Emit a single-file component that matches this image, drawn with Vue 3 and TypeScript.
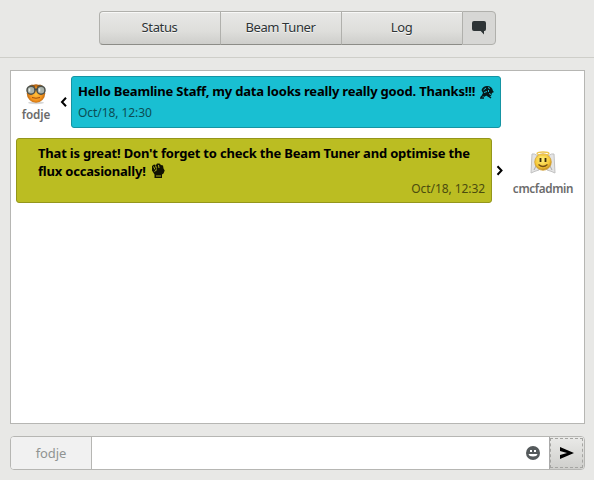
<script setup lang="ts">
import { ref } from 'vue'

const tabs: string[] = ['Status', 'Beam Tuner', 'Log']
const user = 'fodje'
const draft = ref('')
</script>

<template>
  <div class="window">
    <header class="toolbar">
      <nav class="switcher">
        <button v-for="tab in tabs" :key="tab" class="tab"><span>{{ tab }}</span></button>
        <button class="tab active" aria-label="Chat">
          <svg width="14" height="14" viewBox="0 0 14 14">
            <path d="M2 0h10q2 0 2 2v6q0 2-1.500 2H12v3.500L8.700 10H2q-2 0-2-2V2q0-2 2-2z" fill="#2e3436" />
          </svg>
        </button>
      </nav>
    </header>

    <main class="chat">
      <section class="row incoming">
        <div class="person">
          <svg class="avatar" width="22" height="22" viewBox="0 0 22 22">
            <defs>
              <radialGradient id="orange" cx=".5" cy=".55" r=".55">
                <stop offset="0" stop-color="#ffc13c" />
                <stop offset=".6" stop-color="#f3921c" />
                <stop offset="1" stop-color="#a85a10" />
              </radialGradient>
            </defs>
            <ellipse cx="11" cy="19.800" rx="8" ry="1.500" fill="#d6d6d6" />
            <circle cx="11" cy="10.500" r="9.200" fill="url(#orange)" />
            <path d="M4 3.500q3-3 6 0M12 3.500q3-3 6 0" fill="none" stroke="#8a5010" />
            <circle cx="6" cy="7.200" r="4" fill="#aab3ac" stroke="#4c504a" stroke-width="1.500" />
            <circle cx="16" cy="7.200" r="4" fill="#aab3ac" stroke="#4c504a" stroke-width="1.500" />
            <path d="M9.500 7q1.500-1.500 3 0" fill="none" stroke="#4c504a" stroke-width="1.300" />
            <path d="M4.500 5.500v3M14.500 5.500v3" stroke="#e3e9e5" stroke-width="1.500" />
            <path d="M7 14.500q4 1.500 8 0" fill="none" stroke="#a3500c" />
          </svg>
          <span class="name">fodje</span>
        </div>
        <svg class="arrow" width="8" height="12" viewBox="0 0 8 12"><path d="M6 1.800 2 6l4 4.200" /></svg>
        <article class="bubble blue">
          <p class="message"><span class="words">Hello Beamline Staff, my data looks really really good. Thanks!!!</span>
            <svg class="glyph" width="14" height="14" viewBox="0 0 14 14">
              <path d="M1.500 5Q3 1 7 1q5 0 6 5l1 1-2 1-1 3-3 1-1-2-3 2-2-2 1-2z" fill="#06191b" />
              <path d="M3.500 5 6 3M4 7.500l3-1M9 8.500l2 1M8 2.500l2 1M8.500 5v2" stroke="#19bfd2" fill="none" />
              <path d="M1 12q3-3 6-2l4 3M0 13h4" stroke="#06191b" stroke-width="1.500" fill="none" />
            </svg>
          </p>
          <time>Oct/18, 12:30</time>
        </article>
      </section>

      <section class="row outgoing">
        <article class="bubble olive">
          <p class="message"><span class="words">That is great! Don't forget to check the Beam Tuner and optimise the</span><br><span class="words">flux occasionally!</span>
            <svg class="glyph" width="14" height="16" viewBox="0 0 14 16">
              <path d="M3.500 15v-3.500L1 7.500V3l2-1.500 2 .5 1-1.500h2.500L10 2l2 .5.5 3 1.200 2-1.200 3-1.500 1V15z" fill="#111302" />
              <path d="M2.500 3.500 4 6.500M4.500 2.500l1 3M7.500 2 8 5M3.500 8.500 6 6.500M5 13h5" fill="none" stroke="#bbbd22" stroke-width=".9" />
            </svg>
          </p>
          <time>Oct/18, 12:32</time>
        </article>
        <svg class="arrow" width="8" height="12" viewBox="0 0 8 12"><path d="m1.500 1.300 4 4.200-4 4.200" /></svg>
        <div class="person">
          <svg class="avatar" width="26" height="24" viewBox="0 0 26 24">
            <defs>
              <radialGradient id="yellow" cx=".45" cy=".35" r=".65">
                <stop offset="0" stop-color="#fff07a" />
                <stop offset=".7" stop-color="#f5c737" />
                <stop offset="1" stop-color="#bd861c" />
              </radialGradient>
            </defs>
            <path d="M8 5Q4 2 2 3L1 22q4-2 8-3zM18 5q4-3 6-2l1 19q-4-2-8-3z" fill="#e4e4e4" stroke="#c2c2c2" />
            <path d="m4 19 2-4M22 19l-2-4" stroke="#aaa" />
            <circle cx="13" cy="11" r="8.300" fill="url(#yellow)" stroke="#cf9a2b" stroke-width=".7" />
            <ellipse cx="13" cy="2.500" rx="6" ry="1.500" fill="none" stroke="#edc44b" stroke-width="1.300" />
            <path d="M10.500 7v4M15.500 7v4" stroke="#392a0b" stroke-width="1.800" />
            <path d="M8.500 13.500q4.500 4 9 0" fill="none" stroke="#765014" stroke-width="1.200" />
          </svg>
          <span class="name">cmcfadmin</span>
        </div>
      </section>
    </main>

    <footer class="composer">
      <span class="author">{{ user }}</span>
      <div class="entry">
        <input v-model="draft" aria-label="Message" />
        <svg width="14" height="14" viewBox="0 0 14 14">
          <circle cx="7" cy="7" r="7" fill="#555a5c" />
          <path d="M4 4h2v2H4zM8 4h2v2H8zM2.500 8h9q-.5 2.500-4.500 2.500T2.500 8z" fill="#fff" />
        </svg>
      </div>
      <button class="send" aria-label="Send">
        <svg width="14" height="12" viewBox="0 0 14 12"><path d="M0 0 14 6 0 12V8l7-2-7-2z" /></svg>
      </button>
    </footer>
  </div>
</template>

<style>
body { margin: 0; background: #e8e8e6; }
</style>

<style scoped>
* { box-sizing: border-box; }
.window { width: 594px; height: 480px; display: flex; flex-direction: column; background: #e8e8e6; font: 13px/18px "Noto Sans", sans-serif; color: #2e3436; overflow: hidden; }
button, input { font: inherit; color: inherit; padding: 0; }
.toolbar { height: 58px; flex: none; border-bottom: 1px solid #cecec9; padding: 11px 0 0 99px; }
.switcher { display: flex; width: 397px; height: 34px; }
.tab { width: 121px; flex: none; border: 1px solid #b0b0ac; border-right: 0; border-bottom-color: #8c8c87; background: linear-gradient(#e8e8e6, #dededb 60%, #cececb); box-shadow: inset 0 1px #f8f8f7; text-shadow: 0 1px #f5f5f4; letter-spacing: -.38px; display: flex; align-items: center; justify-content: center; }
.tab span { padding: 0 1px 2px 0; }
.tab:first-child { border-radius: 4px 0 0 4px; }
.tab.active { width: 34px; border-right: 1px solid #b0b0ac; border-bottom-color: #b0b0ac; border-radius: 0 4px 4px 0; background: #d7d7d5; box-shadow: none; }
.chat { width: 575px; height: 354px; margin: 12px 0 0 10px; border: 1px solid #b6b6b3; background: #fff; padding: 5px; flex: none; }
.row { display: flex; align-items: center; }
.incoming { height: 52px; }
.outgoing { height: 65px; margin-top: 10px; }
.person { display: flex; flex-direction: column; align-items: center; }
.incoming .person { width: 40px; }
.outgoing .person { width: 72px; margin: 5px 0 0 3px; }
.name { font-size: 11.700px; line-height: 16px; font-weight: 600; color: #6b6b6b; margin-top: 1px; }
.incoming .name { letter-spacing: -.15px; }
.outgoing .name { letter-spacing: -.35px; margin-top: 5px; }
.arrow { fill: none; stroke: #000; stroke-width: 2; flex: none; }
.incoming .arrow { margin-left: 4px; }
.outgoing .arrow { margin-left: 4px; }
.bubble { border: 1px solid; border-radius: 3px; height: 100%; padding: 5px 6px; display: flex; flex-direction: column; justify-content: space-between; }
.blue { width: 430px; margin-left: 3px; background: #19bfd2; border-color: #1594a3; }
.olive { width: 476px; background: #bbbd22; border-color: #94961b; }
.message { margin: 0; color: #000; font-weight: 700; letter-spacing: -.195px; white-space: nowrap; height: 18px; }
.olive .message { padding-left: 15px; height: 36px; }
.glyph { vertical-align: -3px; margin-left: 5px; }
time { font-size: 12px; line-height: 18px; letter-spacing: -.07px; color: #0b4d54; }
.olive time { align-self: flex-end; color: #4b4c0e; }
.composer { width: 575px; height: 34px; margin: 12px 0 0 10px; display: flex; flex: none; border: 1px solid #b6b6b3; border-radius: 4px; background: #fff; overflow: hidden; }
.author { width: 81px; border-right: 1px solid #b6b6b3; background: #f1f1f1; color: #909492; display: flex; align-items: center; justify-content: center; padding-bottom: 1px; letter-spacing: -.1px; }
.entry { flex: 1; display: flex; align-items: center; padding-right: 9px; }
.entry input { flex: 1; min-width: 0; height: 100%; border: 0; outline: 0; background: none; }
.send { width: 35px; border: 0; border-left: 1px solid #aaa; background: linear-gradient(#eaeae8, #cfcfcc); outline: 1px dashed #a5a5a2; outline-offset: -2px; display: flex; align-items: center; justify-content: center; }
</style>
